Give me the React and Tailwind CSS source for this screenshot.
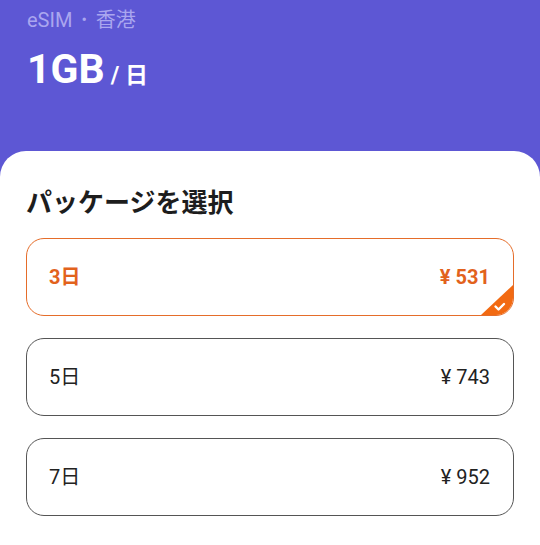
import React, { useState } from 'react';

const packages = [
  { id: 3, label: '3日', price: '531' },
  { id: 5, label: '5日', price: '743' },
  { id: 7, label: '7日', price: '952' },
];

const font = { fontFamily: 'Roboto, "Noto Sans CJK JP", sans-serif' };

const PackageCard = ({ pkg, selected, onSelect }) => (
  <button
    onClick={() => onSelect(pkg.id)}
    className={`relative flex h-[78px] w-full items-center justify-between overflow-hidden rounded-[18px] bg-white pl-[22px] pr-[23px] text-[20px] ${
      selected ? 'border-[1.5px] border-[#e56d2a] font-bold text-[#e2621c]' : 'border border-[#555] text-[#222]'
    }`}
  >
    <span>{pkg.label}</span>
    <span>¥ {pkg.price}</span>
    {selected && (
      <svg className="absolute bottom-0 right-0" width="32" height="30" viewBox="0 0 32 30">
        <polygon points="32,0 32,30 0,30" fill="#f26a12" />
        <path d="M14.5 21.5 L17.5 24.5 L23 19" stroke="#fff" strokeWidth="2.4" fill="none" strokeLinecap="round" strokeLinejoin="round" />
      </svg>
    )}
  </button>
);

export default function App() {
  const [selected, setSelected] = useState(3);

  return (
    <div className="h-[545px] w-[540px] overflow-hidden bg-[#5d57d4]" style={font}>
      {/* header */}
      <div className="h-[151px] px-[27px] pt-[7px]">
        <p className="flex items-center text-[20px] leading-[26px] text-[#aaa6ef]">
          <span>eSIM</span>
          <span className="mx-[9px] text-[16px]">•</span>
          <span>香港</span>
        </p>
        <p className="mt-[14px] flex items-baseline text-white">
          <span className="text-[41px] font-bold leading-[44px]">1GB</span>
          <span className="ml-[6px] text-[23px] font-bold">/ 日</span>
        </p>
      </div>

      {/* package sheet */}
      <div className="h-full rounded-t-[26px] bg-white px-[26px] pt-[34px]">
        <h2 className="text-[26px] font-bold leading-[36px] text-[#1d1d1d]">パッケージを選択</h2>
        <div className="mt-[17px] flex flex-col gap-[22px]">
          {packages.map((pkg) => (
            <PackageCard key={pkg.id} pkg={pkg} selected={selected === pkg.id} onSelect={setSelected} />
          ))}
        </div>
      </div>
    </div>
  );
}
